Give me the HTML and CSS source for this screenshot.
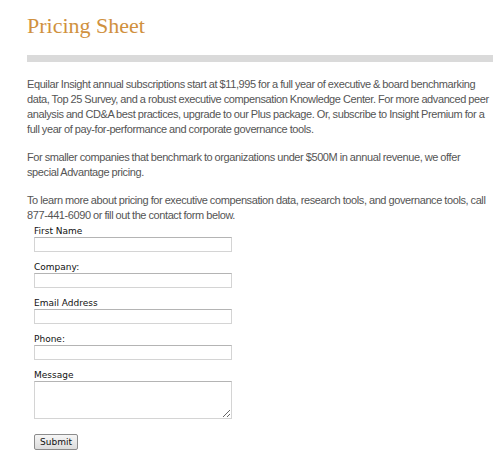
FILE: index.html
```html
<!DOCTYPE html>
<html>
<head>
<meta charset="utf-8">
<link rel="stylesheet" href="styles.css">
</head>
<body>
<div class="page">
  <h1 class="title">Pricing Sheet</h1>
  <div class="rule"></div>
  <p class="copy">Equilar Insight annual subscriptions start at $11,995 for a full year of executive &amp; board benchmarking data, Top 25 Survey, and a robust executive compensation Knowledge Center. For more advanced peer analysis and CD&amp;A best practices, upgrade to our Plus package. Or, subscribe to Insight Premium for a full year of pay-for-performance and corporate governance tools.</p>
  <p class="copy">For smaller companies that benchmark to organizations under $500M in annual revenue, we offer special Advantage pricing.</p>
  <p class="copy last">To learn more about pricing for executive compensation data, research tools, and governance tools, call 877-441-6090 or fill out the contact form below.</p>
  <form class="form">
    <div class="field"><label class="label">First Name</label><input class="input" type="text"></div>
    <div class="field"><label class="label">Company:</label><input class="input" type="text"></div>
    <div class="field"><label class="label">Email Address</label><input class="input" type="text"></div>
    <div class="field"><label class="label">Phone:</label><input class="input" type="text"></div>
    <div class="field"><label class="label">Message</label><textarea class="area"></textarea></div>
    <button class="submit" type="button">Submit</button>
  </form>
</div>
</body>
</html>
```
FILE: styles.css
```css
html, body {
  margin: 0;
  padding: 0;
  background: #fff;
}
.page {
  padding: 11px 7px 0 27px;
  width: 466px;
  font-family: "Liberation Sans", Arial, sans-serif;
}
.title {
  margin: 0;
  font-family: "Liberation Serif", "Times New Roman", serif;
  font-weight: normal;
  font-size: 22px;
  line-height: 30px;
  color: #d0913e;
}
.rule {
  margin-top: 14px;
  height: 7px;
  background: #dadada;
}
.copy {
  margin: 15px 0 0 0;
  font-size: 11px;
  letter-spacing: -0.4px;
  word-spacing: -0.3px;
  line-height: 15px;
  color: #555;
}
.copy + .copy {
  margin-top: 13px;
}
.form {
  display: flex;
  flex-direction: column;
  align-items: flex-start;
  padding-left: 7px;
  margin-top: 3px;
}
.field {
  display: flex;
  flex-direction: column;
  margin-bottom: 10px;
}
.label {
  font-family: "DejaVu Sans", Verdana, sans-serif;
  font-size: 9px;
  line-height: 11px;
  color: #111;
}
.input, .area {
  box-sizing: border-box;
  width: 198px;
  height: 15px;
  margin: 0;
  padding: 0 2px;
  border: 1px solid #d4d4d4;
  border-top-color: #b4b4b4;
  background: #fff;
}
.area {
  height: 38px;
  resize: both;
}
.field:last-of-type {
  margin-bottom: 15px;
}
.submit {
  box-sizing: border-box;
  width: 44px;
  height: 16px;
  padding: 0;
  font-family: "DejaVu Sans", Verdana, sans-serif;
  font-size: 9px;
  color: #111;
  border: 1px solid #8c8c8c;
  border-radius: 2px;
  background: linear-gradient(#f6f6f6, #dcdcdc);
}
```
